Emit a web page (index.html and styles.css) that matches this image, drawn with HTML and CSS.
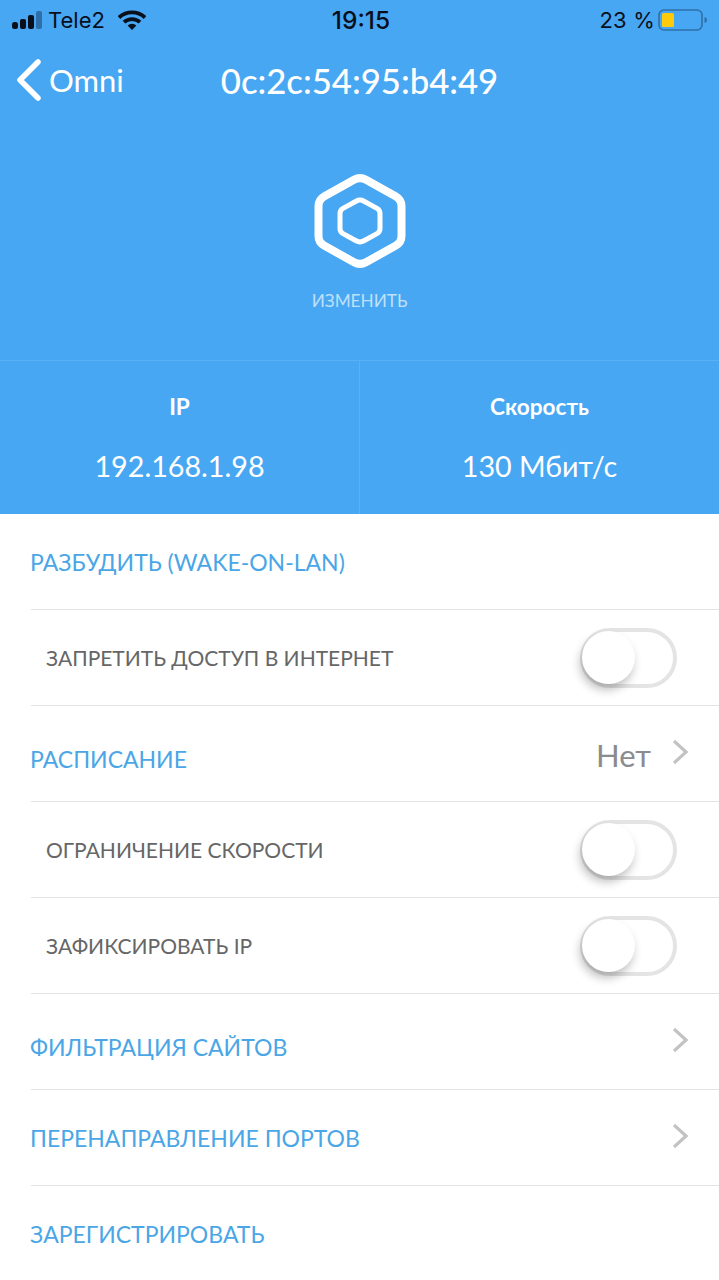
FILE: index.html
```html
<!DOCTYPE html>
<html lang="en">
<head>
	<meta charset="UTF-8">
	<title>Omni</title>
	<link rel="stylesheet" href="styles.css">
</head>
<body>
	<div class="top">
		<div class="status">
			<div class="status-left">
				<svg class="signal" width="31" height="19" viewBox="0 0 31 19">
					<rect x="0" y="11" width="6" height="7" rx="2.500" fill="#0a0f1c"/>
					<rect x="8" y="8" width="6" height="10" rx="2" fill="#0a0f1c"/>
					<rect x="16" y="4" width="6" height="14" rx="2" fill="#0a0f1c"/>
					<rect x="24" y="0" width="6" height="18" rx="2" fill="#2f6fa8"/>
				</svg>
				<span class="carrier">Tele2</span>
				<svg class="wifi" width="28" height="20" viewBox="0 0 28 20">
					<path d="M1 7.500a19 19 0 0 1 26 0" fill="none" stroke="#0a0f1c" stroke-width="3.800"/>
					<path d="M6 12.200a12 12 0 0 1 16 0" fill="none" stroke="#0a0f1c" stroke-width="3.800"/>
					<path d="M9.600 15.400a6.500 6.500 0 0 1 8.800 0L14 20z" fill="#0a0f1c"/>
				</svg>
			</div>
			<div class="clock">19:15</div>
			<div class="status-right">
				<span class="percent">23 %</span>
				<svg class="battery" width="50" height="24" viewBox="0 0 50 24">
					<rect x="1" y="2" width="43" height="20" rx="5" fill="none" stroke="#2f6fa8" stroke-width="1.600"/>
					<rect x="4" y="5" width="12" height="14" rx="1.500" fill="#fdcb0a"/>
					<path d="M46.500 9c1.600.4 2.500 1.500 2.500 3s-.9 2.600-2.500 3z" fill="#2f6fa8"/>
				</svg>
			</div>
		</div>
		<div class="nav">
			<div class="back">
				<svg width="28" height="44" viewBox="0 0 28 44">
					<path d="M24 4L6 22l18 18" fill="none" stroke="#fff" stroke-width="5.500" stroke-linecap="round" stroke-linejoin="round"/>
				</svg>
				<span>Omni</span>
			</div>
			<div class="title">0c:2c:54:95:b4:49</div>
		</div>
		<div class="device">
			<svg width="92" height="98" viewBox="0 0 92 98">
				<path d="M40 7.800Q46 4.500 52 7.800L81.500 24.200Q87.500 27.500 87.500 34V64Q87.500 70.500 81.500 73.800L52 90.200Q46 93.500 40 90.200L10.500 73.800Q4.500 70.500 4.500 64V34Q4.500 27.500 10.500 24.200Z" fill="none" stroke="#fff" stroke-width="8"/>
				<path d="M42 29.200Q46 27 50 29.200L63 36.400Q66 38 66 41.500V56.500Q66 60 63 61.600L50 68.800Q46 71 42 68.800L29 61.600Q26 60 26 56.500V41.500Q26 38 29 36.400Z" fill="none" stroke="#fff" stroke-width="5"/>
			</svg>
			<div class="change">ИЗМЕНИТЬ</div>
		</div>
		<div class="stats">
			<div class="stat">
				<div class="stat-name">IP</div>
				<div class="stat-value">192.168.1.98</div>
			</div>
			<div class="stat">
				<div class="stat-name">Скорость</div>
				<div class="stat-value">130 Мбит/с</div>
			</div>
		</div>
	</div>
	<ul class="list">
		<li class="row link">РАЗБУДИТЬ (WAKE-ON-LAN)</li>
		<li class="row plain">ЗАПРЕТИТЬ ДОСТУП В ИНТЕРНЕТ<span class="toggle"></span></li>
		<li class="row link"><span class="low">РАСПИСАНИЕ</span>
			<span class="row-end">
				<span class="row-value">Нет</span>
				<svg class="chevron" width="18" height="26" viewBox="0 0 18 26"><path d="M3 2l12 11L3 24" fill="none" stroke="#c2c3c5" stroke-width="3.200"/></svg>
			</span>
		</li>
		<li class="row plain">ОГРАНИЧЕНИЕ СКОРОСТИ<span class="toggle"></span></li>
		<li class="row plain">ЗАФИКСИРОВАТЬ IP<span class="toggle"></span></li>
		<li class="row link"><span class="low">ФИЛЬТРАЦИЯ САЙТОВ</span>
			<span class="row-end">
				<svg class="chevron" width="18" height="26" viewBox="0 0 18 26"><path d="M3 2l12 11L3 24" fill="none" stroke="#c2c3c5" stroke-width="3.200"/></svg>
			</span>
		</li>
		<li class="row link">ПЕРЕНАПРАВЛЕНИЕ ПОРТОВ
			<span class="row-end">
				<svg class="chevron" width="18" height="26" viewBox="0 0 18 26"><path d="M3 2l12 11L3 24" fill="none" stroke="#c2c3c5" stroke-width="3.200"/></svg>
			</span>
		</li>
		<li class="row link last">ЗАРЕГИСТРИРОВАТЬ</li>
	</ul>
</body>
</html>
```

FILE: styles.css
```css
*{
	box-sizing: border-box;
}
html,body{
	margin: 0;
	padding: 0;
}
body{
	width: 719px;
	height: 1280px;
	overflow: hidden;
	background: #fff;
	font-family: "Lato", "Open Sans", sans-serif;
}
.top{
	height: 514px;
	background: #48a7f2;
	color: #fff;
	display: flex;
	flex-direction: column;
}

/* status bar */
.status{
	height: 40px;
	padding: 0 11px 0 12px;
	display: flex;
	justify-content: space-between;
	align-items: center;
	font-family: "Inter", "Liberation Sans", sans-serif;
	font-size: 22px;
	color: #0a0f1c;
}
.status-left{
	width: 200px;
	display: flex;
	align-items: center;
}
.carrier{
	margin-left: 5px;
}
.wifi{
	margin-left: 13px;
}
.clock{
	font-size: 24.500px;
	font-weight: 500;
	margin-left: 2px;
}
.status-right{
	width: 200px;
	display: flex;
	justify-content: flex-end;
	align-items: center;
}
.percent{
	margin-right: 3px;
	letter-spacing: .2px;
}

/* nav */
.nav{
	height: 80px;
	position: relative;
	display: flex;
	align-items: center;
	justify-content: center;
}
.back{
	position: absolute;
	left: 14px;
	top: 18px;
	display: flex;
	align-items: center;
	font-size: 31px;
	gap: 7px;
}
.title{
	font-size: 34.700px;
	font-weight: 500;
}

/* device icon */
.device{
	height: 240px;
	display: flex;
	flex-direction: column;
	align-items: center;
	padding-top: 52px;
}
.change{
	margin-top: 20px;
	font-size: 17.200px;
	color: #bfe0fa;
}

/* ip and speed */
.stats{
	flex: 1;
	display: flex;
	border-top: 1px solid #5ab0f4;
}
.stat{
	flex: 1;
	text-align: center;
	padding-top: 32px;
}
.stat + .stat{
	border-left: 1px solid #5ab0f4;
}
.stat-name{
	font-size: 22.600px;
	font-weight: 700;
	line-height: 28px;
}
.stat-value{
	margin-top: 27px;
	font-size: 28.700px;
	line-height: 36px;
}

/* list */
.list{
	list-style: none;
	margin: 0;
	padding: 0 0 0 31px;
}
.row{
	height: 96px;
	display: flex;
	align-items: center;
	justify-content: space-between;
	border-bottom: 1px solid #e3e3e3;
}
.row.last{
	border-bottom: none;
}
.link{
	font-size: 23px;
	color: #4aa6e6;
	text-indent: -1px;
}
.low{
	margin-top: 10px;
}
.plain{
	padding-left: 15px;
	font-size: 21px;
	color: #666;
}
.row-end{
	display: flex;
	align-items: center;
	margin-right: 30px;
}
.row-value{
	font-size: 31px;
	color: #8a8b8e;
	margin-right: 20px;
	margin-top: 3px;
}
.chevron{
	display: block;
	margin-top: -4px;
}
.toggle{
	position: relative;
	width: 97px;
	height: 60px;
	margin-right: 42px;
	border: 4px solid #e4e4e4;
	border-radius: 30px;
	background: #fff;
}
.toggle::after{
	content: "";
	position: absolute;
	left: -2px;
	top: -1px;
	width: 53px;
	height: 53px;
	border-radius: 50%;
	background: #fff;
	box-shadow: -2px 6px 10px rgba(0,0,0,.25);
}
```
